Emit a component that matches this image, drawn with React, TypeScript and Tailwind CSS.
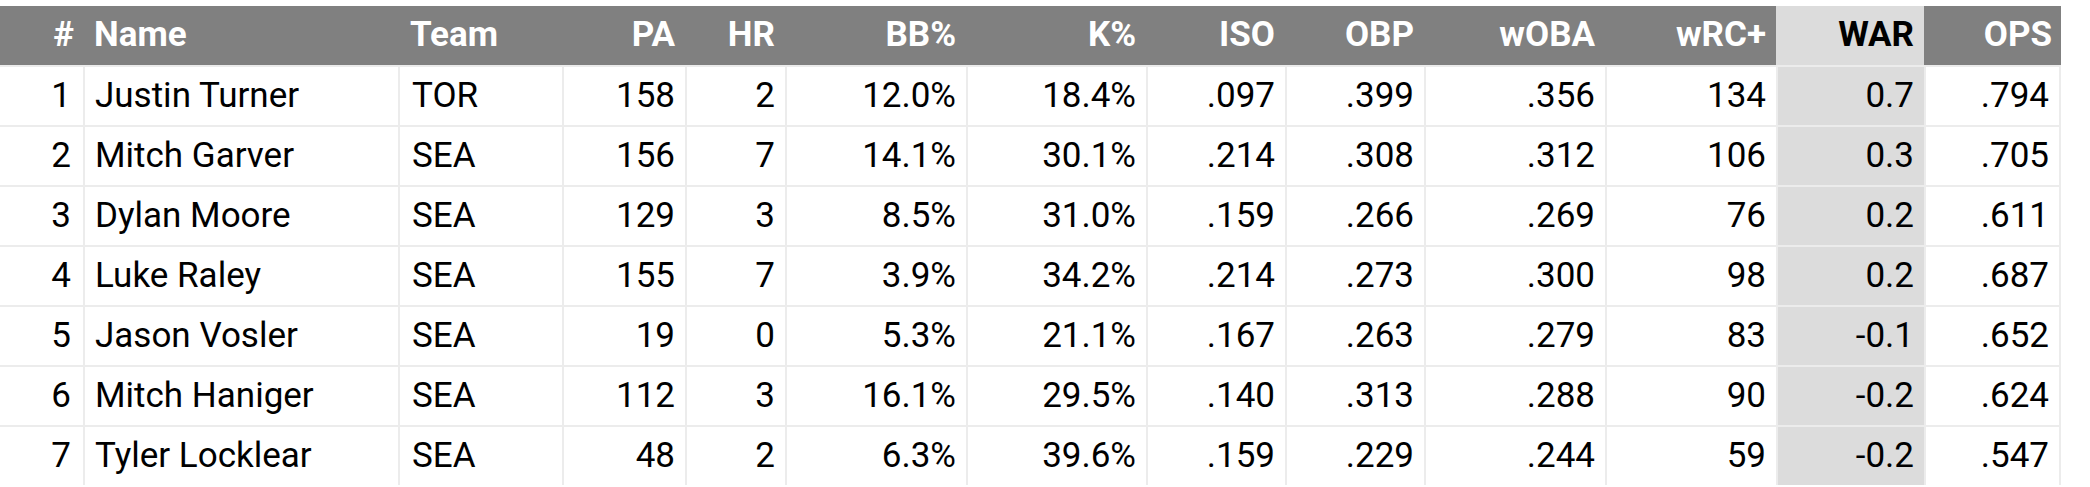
import React from "react";

type Row = {
  rank: number;
  name: string;
  team: string;
  pa: number;
  hr: number;
  bb: string;
  k: string;
  iso: string;
  obp: string;
  woba: string;
  wrc: number;
  war: string;
  ops: string;
};

const rows: Row[] = [
  { rank: 1, name: "Justin Turner", team: "TOR", pa: 158, hr: 2, bb: "12.0%", k: "18.4%", iso: ".097", obp: ".399", woba: ".356", wrc: 134, war: "0.7", ops: ".794" },
  { rank: 2, name: "Mitch Garver", team: "SEA", pa: 156, hr: 7, bb: "14.1%", k: "30.1%", iso: ".214", obp: ".308", woba: ".312", wrc: 106, war: "0.3", ops: ".705" },
  { rank: 3, name: "Dylan Moore", team: "SEA", pa: 129, hr: 3, bb: "8.5%", k: "31.0%", iso: ".159", obp: ".266", woba: ".269", wrc: 76, war: "0.2", ops: ".611" },
  { rank: 4, name: "Luke Raley", team: "SEA", pa: 155, hr: 7, bb: "3.9%", k: "34.2%", iso: ".214", obp: ".273", woba: ".300", wrc: 98, war: "0.2", ops: ".687" },
  { rank: 5, name: "Jason Vosler", team: "SEA", pa: 19, hr: 0, bb: "5.3%", k: "21.1%", iso: ".167", obp: ".263", woba: ".279", wrc: 83, war: "-0.1", ops: ".652" },
  { rank: 6, name: "Mitch Haniger", team: "SEA", pa: 112, hr: 3, bb: "16.1%", k: "29.5%", iso: ".140", obp: ".313", woba: ".288", wrc: 90, war: "-0.2", ops: ".624" },
  { rank: 7, name: "Tyler Locklear", team: "SEA", pa: 48, hr: 2, bb: "6.3%", k: "39.6%", iso: ".159", obp: ".229", woba: ".244", wrc: 59, war: "-0.2", ops: ".547" },
];

const cols = "grid grid-cols-[83px_315px_164px_123px_100px_181px_180px_139px_139px_181px_171px_148px_137px]";

const cell = "flex items-center border-l-2 border-[#ececec]";
const num = `${cell} justify-end pr-[10px]`;

export default function App() {
  return (
    <div className="w-[2090px] h-[487px] bg-white font-['Roboto',sans-serif] text-[35px] text-black pt-[6px]">
      <div className="w-[2061px]">
        {/* header */}
        <div className={`${cols} h-[59px] bg-[#808080] font-bold text-white`}>
          <div className="flex items-center justify-end pr-[9px]">#</div>
          <div className="flex items-center pl-[11px]">Name</div>
          <div className="flex items-center pl-[12px]">Team</div>
          <div className="flex items-center justify-end pr-[10px]">PA</div>
          <div className="flex items-center justify-end pr-[10px]">HR</div>
          <div className="flex items-center justify-end pr-[10px]">BB%</div>
          <div className="flex items-center justify-end pr-[10px]">K%</div>
          <div className="flex items-center justify-end pr-[10px]">ISO</div>
          <div className="flex items-center justify-end pr-[10px]">OBP</div>
          <div className="flex items-center justify-end pr-[10px]">wOBA</div>
          <div className="flex items-center justify-end pr-[10px]">wRC+</div>
          <div className="flex items-center justify-end pr-[10px] bg-[#dcdcdc] text-black">WAR</div>
          <div className="flex items-center justify-end pr-[9px]">OPS</div>
        </div>

        {rows.map((r) => (
          <div key={r.rank} className={`${cols} h-[60px] border-t-2 border-[#ececec]`}>
            <div className="flex items-center justify-end pr-[12px]">{r.rank}</div>
            <div className={`${cell} pl-[10px]`}>{r.name}</div>
            <div className={`${cell} pl-[12px]`}>{r.team}</div>
            <div className={num}>{r.pa}</div>
            <div className={num}>{r.hr}</div>
            <div className={num}>{r.bb}</div>
            <div className={num}>{r.k}</div>
            <div className={num}>{r.iso}</div>
            <div className={num}>{r.obp}</div>
            <div className={num}>{r.woba}</div>
            <div className={num}>{r.wrc}</div>
            <div className={`${num} bg-[#dcdcdc]`}>{r.war}</div>
            <div className={`${num} border-r-2 pr-[8px]`}>{r.ops}</div>
          </div>
        ))}
      </div>
    </div>
  );
}
